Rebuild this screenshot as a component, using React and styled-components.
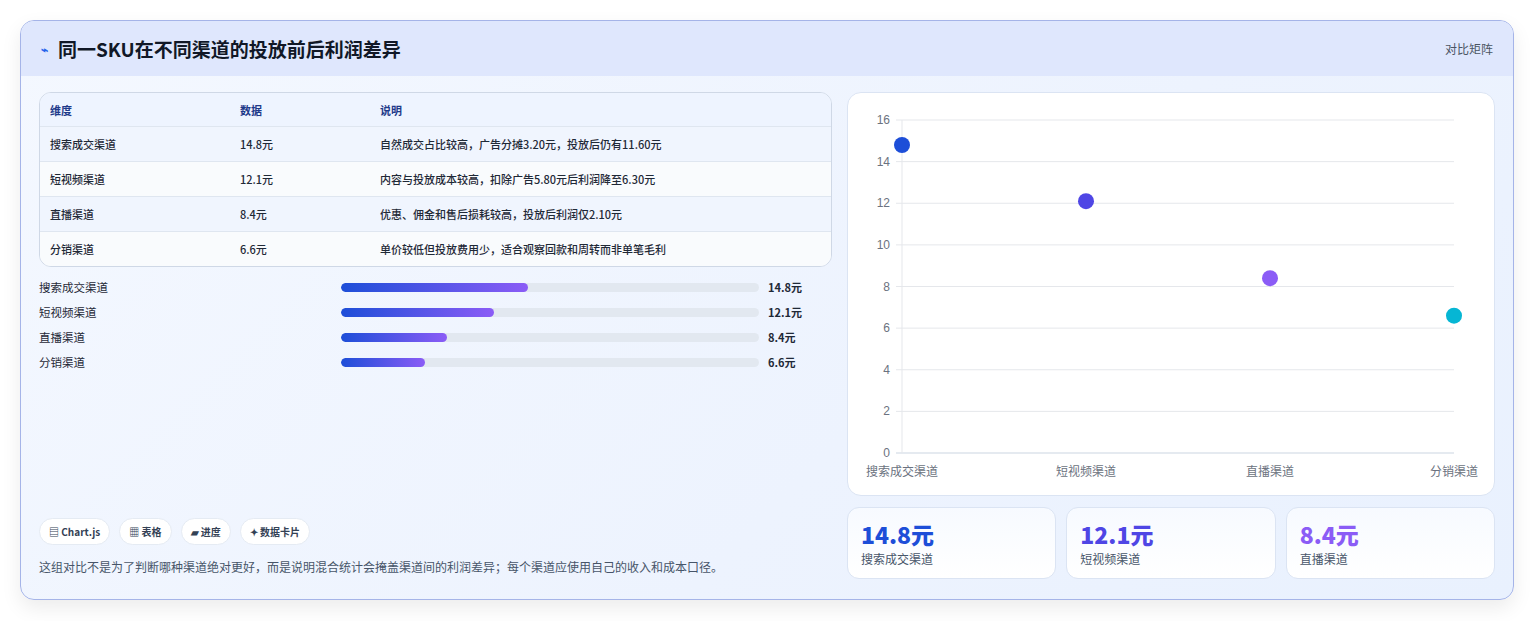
import React from 'react';
import styled, { createGlobalStyle } from 'styled-components';

const Global = createGlobalStyle`
  body { margin: 0; background: #f3f4f6; font-family: "Noto Sans CJK SC", "Noto Sans", sans-serif; }
`;

const Page = styled.div`
  background: #fff;
  padding: 20px 20px 20px 20px;
  height: 581px;
`;

const Card = styled.div`
  border: 1px solid #a5b4e8;
  border-radius: 14px;
  overflow: hidden;
  background: linear-gradient(135deg, #f4f8ff 0%, #edf3fe 60%, #e9f1fe 100%);
  box-shadow: 0 8px 20px rgba(0, 0, 0, 0.08);
  height: 578px;
  display: flex;
  flex-direction: column;
`;

const Header = styled.div`
  height: 55px;
  background: #dfe7fd;
  display: flex;
  align-items: center;
  justify-content: space-between;
  padding: 0 20px;
`;

const Title = styled.h1`
  margin: 0;
  font-size: 19px;
  font-weight: 700;
  color: #111827;
  display: flex;
  align-items: center;
  gap: 10px;
`;

const Tag = styled.span`
  font-size: 12px;
  color: #4b5563;
`;

const Body = styled.div`
  flex: 1;
  display: grid;
  grid-template-columns: 793px 648px;
  gap: 15px;
  padding: 16px 18px 18px 18px;
`;

const Left = styled.div`
  display: flex;
  flex-direction: column;
`;

const Table = styled.div`
  border: 1px solid #cfd8e6;
  border-radius: 12px;
  overflow: hidden;
  background: #f8fbff;
`;

const Row = styled.div`
  display: grid;
  grid-template-columns: 190px 140px 1fr;
  height: ${p => (p.$head ? 33 : 34)}px;
  align-items: center;
  padding: 0 10px;
  font-size: 11px;
  font-weight: ${p => (p.$head ? 700 : 500)};
  color: ${p => (p.$head ? '#1e3a8a' : '#1f2937')};
  background: ${p => (p.$head ? '#eef4ff' : p.$alt ? '#f9fbfd' : '#f0f5fe')};
  border-top: ${p => (p.$first ? 'none' : '1px solid #dfe6f0')};
`;

const Bars = styled.div`
  display: flex;
  flex-direction: column;
  gap: 10px;
  margin-top: 12px;
`;

const BarRow = styled.div`
  display: grid;
  grid-template-columns: 302px 418px 1fr;
  gap: 0;
  align-items: center;
  height: 15px;
  font-size: 11.5px;
  color: #1f2937;
`;

const Track = styled.div`
  height: 9px;
  border-radius: 5px;
  background: #e2e8f0;
  overflow: hidden;
`;

const Fill = styled.div`
  height: 100%;
  border-radius: 5px;
  background: linear-gradient(90deg, #1d4ed8, #8b5cf6);
`;

const Val = styled.span`
  padding-left: 9px;
  font-weight: 700;
  font-size: 11px;
`;

const Chips = styled.div`
  margin-top: auto;
  display: flex;
  gap: 9px;
`;

const Chip = styled.span`
  background: #fff;
  border: 1px solid #e5ebf3;
  border-radius: 14px;
  padding: 5px 9px;
  font-size: 10px;
  font-weight: 700;
  color: #334155;
`;

const Note = styled.p`
  margin: 13px 0 6px;
  font-size: 12px;
  color: #475569;
`;

const Right = styled.div`
  display: flex;
  flex-direction: column;
  gap: 11px;
`;

const ChartPanel = styled.div`
  background: #fff;
  border: 1px solid #dbe4f3;
  border-radius: 14px;
  height: 402px;
`;

const Stats = styled.div`
  display: grid;
  grid-template-columns: repeat(3, 1fr);
  gap: 10px;
`;

const Stat = styled.div`
  height: 72px;
  background: linear-gradient(180deg, #f7faff, #fff);
  border: 1px solid #dbe4f3;
  border-radius: 12px;
  padding: 10px 13px;
  box-sizing: border-box;
`;

const StatNum = styled.div`
  font-size: 23px;
  font-weight: 800;
  color: ${p => p.$c};
  line-height: 32px;
`;

const StatLabel = styled.div`
  font-size: 12px;
  color: #475569;
`;

const data = [
  { name: '搜索成交渠道', v: 14.8, note: '自然成交占比较高，广告分摊3.20元，投放后仍有11.60元', c: '#1d4ed8' },
  { name: '短视频渠道', v: 12.1, note: '内容与投放成本较高，扣除广告5.80元后利润降至6.30元', c: '#4f46e5' },
  { name: '直播渠道', v: 8.4, note: '优惠、佣金和售后损耗较高，投放后利润仅2.10元', c: '#8b5cf6' },
  { name: '分销渠道', v: 6.6, note: '单价较低但投放费用少，适合观察回款和周转而非单笔毛利', c: '#06b6d4' },
];

const Chart = () => {
  const x0 = 54, step = 184, yTop = 27, yBot = 360, per = (yBot - yTop) / 16;
  return (
    <svg width="646" height="400" style={{ display: 'block' }}>
      {[0, 2, 4, 6, 8, 10, 12, 14, 16].map(t => {
        const y = yBot - t * per;
        return (
          <g key={t}>
            <line x1={x0 - 6} x2={606} y1={y} y2={y} stroke={t === 0 ? '#cbd5e1' : '#e5e7eb'} />
            <text x={x0 - 12} y={y + 4} fontSize="12" fill="#6b7280" textAnchor="end" fontFamily="Liberation Sans, sans-serif">{t}</text>
          </g>
        );
      })}
      <line x1={x0} x2={x0} y1={yTop} y2={yBot} stroke="#e5e7eb" />
      {data.map((d, i) => (
        <g key={d.name}>
          <circle cx={x0 + i * step} cy={yBot - d.v * per} r="8" fill={d.c} />
          <text x={x0 + i * step} y={383} fontSize="12" fill="#6b7280" textAnchor="middle">{d.name}</text>
        </g>
      ))}
    </svg>
  );
};

export default function App() {
  return (
    <>
      <Global />
      <Page>
        <Card>
          <Header>
            <Title><span style={{ color: '#2563eb', fontSize: 12 }}>⌁</span>同一SKU在不同渠道的投放前后利润差异</Title>
            <Tag>对比矩阵</Tag>
          </Header>
          <Body>
            <Left>
              <Table>
                <Row $head $first><span>维度</span><span>数据</span><span>说明</span></Row>
                {data.map((d, i) => (
                  <Row key={d.name} $alt={i % 2 === 1}>
                    <span>{d.name}</span><span>{d.v}元</span><span>{d.note}</span>
                  </Row>
                ))}
              </Table>
              <Bars>
                {data.map(d => (
                  <BarRow key={d.name}>
                    <span>{d.name}</span>
                    <Track><Fill style={{ width: `${(d.v / 33) * 100}%` }} /></Track>
                    <Val>{d.v}元</Val>
                  </BarRow>
                ))}
              </Bars>
              <Chips>
                <Chip>▤ Chart.js</Chip>
                <Chip>▦ 表格</Chip>
                <Chip>▰ 进度</Chip>
                <Chip>✦ 数据卡片</Chip>
              </Chips>
              <Note>这组对比不是为了判断哪种渠道绝对更好，而是说明混合统计会掩盖渠道间的利润差异；每个渠道应使用自己的收入和成本口径。</Note>
            </Left>
            <Right>
              <ChartPanel><Chart /></ChartPanel>
              <Stats>
                {data.slice(0, 3).map(d => (
                  <Stat key={d.name}>
                    <StatNum $c={d.c}>{d.v}元</StatNum>
                    <StatLabel>{d.name}</StatLabel>
                  </Stat>
                ))}
              </Stats>
            </Right>
          </Body>
        </Card>
      </Page>
    </>
  );
}
